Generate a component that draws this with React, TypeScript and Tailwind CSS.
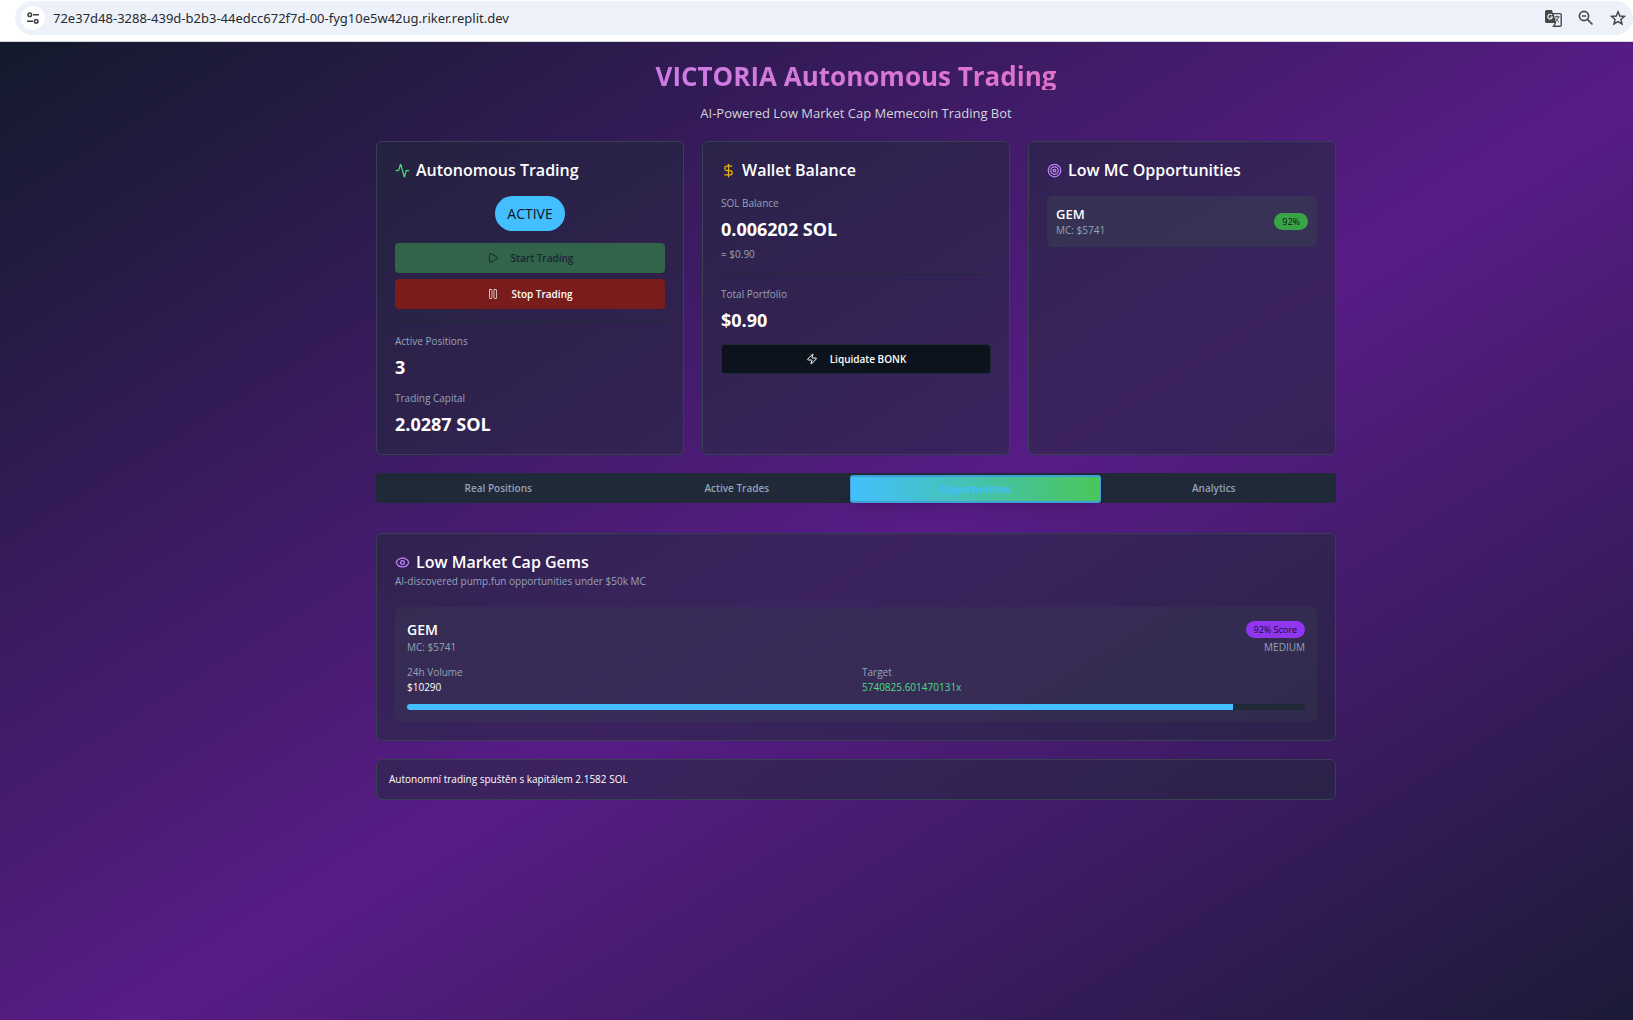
import React from "react";
import { Activity, DollarSign, Target, Play, Pause, Zap, Eye } from "lucide-react";

function BrowserBar() {
  return (
    <div className="flex h-[42px] shrink-0 items-start border-b border-[#d3d6dc] bg-white pt-px pl-[15px]">
      <div className="flex h-[34px] w-full items-center rounded-full bg-[#edf1fa] pr-[7px] pl-1.5">
        <button
          type="button"
          aria-label="View site information"
          className="flex h-6 w-6 shrink-0 items-center justify-center rounded-full bg-white"
        >
          <svg viewBox="0 0 12 12" className="h-3 w-3" fill="none" stroke="#3c4043" strokeWidth="1.5">
            <circle cx="2.8" cy="2.8" r="1.8" />
            <path d="M6 2.8h6M0 9.2h6" />
            <circle cx="9.2" cy="9.2" r="1.8" />
          </svg>
        </button>
        <input
          aria-label="Address"
          defaultValue="72e37d48-3288-439d-b2b3-44edcc672f7d-00-fyg10e5w42ug.riker.replit.dev"
          className="ml-2 min-w-0 flex-1 bg-transparent pt-0.5 font-['Noto_Sans',sans-serif] text-[13px] text-[#27292d] outline-none"
        />
        <div className="flex items-center gap-4 text-[#474747]">
          <button type="button" aria-label="Translate this page">
            <svg viewBox="0 0 17 17" className="h-[17px] w-[17px]">
              <path d="M1.5 0H7l3.5 13h-9A1.5 1.5 0 0 1 0 11.500v-10A1.500 1.500 0 0 1 1.500 0Z" fill="#474747" />
              <path d="M7.700 3.600H15A1.200 1.200 0 0 1 16.200 4.800V15A1.200 1.200 0 0 1 15 16.200H8.500L10.500 13Z" fill="none" stroke="#474747" strokeWidth="1.400" />
              <path d="M7 5.200A2.300 2.300 0 1 0 7.400 7H5.200" fill="none" stroke="#edf1fa" strokeWidth="1.200" />
              <path d="M9.500 6.800H14.500M12 5.600V6.800M13.500 6.800C13 9 11.500 10.500 10.300 11.300M10.700 8.300C11.500 10 12.700 11.300 14 12" fill="none" stroke="#474747" strokeWidth="1" />
            </svg>
          </button>
          <button type="button" aria-label="Zoom out">
            <svg viewBox="0 0 16 16" className="h-4 w-4" fill="none" stroke="#474747" strokeWidth="1.600">
              <circle cx="6" cy="6" r="4.600" />
              <path d="M9.400 9.400L14.500 14.500M4 6h4" />
            </svg>
          </button>
          <button type="button" aria-label="Bookmark this page">
            <svg viewBox="0 0 16 16" className="h-4 w-4" fill="none" stroke="#474747" strokeWidth="1.500">
              <path d="M8 1.800L9.800 6l4.600.4-3.500 3 1.100 4.500L8 11.500l-4 2.400 1.100-4.500-3.500-3L6.200 6Z" />
            </svg>
          </button>
        </div>
      </div>
    </div>
  );
}

function Card({ children }: { children: React.ReactNode }) {
  return (
    <section className="rounded-md border border-[#374151] bg-[#1f2937]/50 p-[18px]">{children}</section>
  );
}

function CardTitle({ icon, children }: { icon: React.ReactNode; children: React.ReactNode }) {
  return (
    <h2 className="flex h-5 items-center gap-1.5 text-[16px] leading-5 font-semibold whitespace-nowrap text-white">
      {icon}
      {children}
    </h2>
  );
}

function Stat({ label, value }: { label: string; value: string }) {
  return (
    <div>
      <p className="text-[10px] leading-[15px] text-[#94a3b8]">{label}</p>
      <p className="mt-1.5 text-[18px] leading-6 font-bold text-white">{value}</p>
    </div>
  );
}

const tabs = ["Real Positions", "Active Trades", "Opportunities", "Analytics"];

export default function App() {
  return (
    <div className="flex h-screen flex-col overflow-hidden font-['Open_Sans','Noto_Sans',sans-serif]">
      <BrowserBar />
      <div className="min-h-0 flex-1 overflow-auto [scrollbar-width:none]">
        <main className="min-h-[calc(100vh+40px)] w-[calc(100%+79px)] bg-linear-to-br/srgb from-[#131a2c] via-[#581c87] to-[#131a2c] p-[18px]">
          <div className="mx-auto max-w-[960px]">
            <header className="text-center">
              <h1 className="bg-linear-to-r/srgb from-[#c084fc] to-[#ec6cb0] bg-clip-text pt-0.5 text-[26px] leading-7 font-bold text-transparent">
                VICTORIA Autonomous Trading
              </h1>
              <p className="mt-3.5 text-[13px] leading-[19px] text-[#d1d5db]">
                AI-Powered Low Market Cap Memecoin Trading Bot
              </p>
            </header>

            <div className="mt-[18px] grid grid-cols-3 gap-[18px]">
              <Card>
                <CardTitle icon={<Activity size={15} className="text-[#4ade80]" />}>Autonomous Trading</CardTitle>
                <div className="mt-4 flex flex-col gap-3">
                  <span className="flex h-[35px] items-center self-center rounded-full bg-[#43bfff] px-3 text-[14px] font-medium text-[#0d131c]">
                    ACTIVE
                  </span>
                  <div className="flex flex-col gap-1.5">
                    <button
                      type="button"
                      disabled
                      className="flex h-[30px] items-center justify-center gap-3 rounded bg-[#32644a] text-[10px] font-semibold text-[#1c2536]"
                    >
                      <Play size={12} />
                      Start Trading
                    </button>
                    <button
                      type="button"
                      className="flex h-[30px] items-center justify-center gap-3 rounded bg-[#7a1c1c] text-[10px] font-semibold text-white"
                    >
                      <Pause size={12} className="text-white/70" />
                      Stop Trading
                    </button>
                  </div>
                  <hr className="border-[#1f2937]" />
                  <Stat label="Active Positions" value="3" />
                  <Stat label="Trading Capital" value="2.0287 SOL" />
                </div>
              </Card>

              <Card>
                <CardTitle icon={<DollarSign size={15} className="text-[#eab308]" />}>Wallet Balance</CardTitle>
                <div className="mt-4 flex flex-col gap-3">
                  <div>
                    <Stat label="SOL Balance" value="0.006202 SOL" />
                    <p className="mt-1.5 text-[10px] leading-[15px] text-[#94a3b8]">≈ $0.90</p>
                  </div>
                  <hr className="border-[#1f2937]" />
                  <Stat label="Total Portfolio" value="$0.90" />
                  <button
                    type="button"
                    className="flex h-[30px] items-center justify-center gap-3 rounded border border-[#1f2937] bg-[#0d131c] text-[10px] font-semibold text-white"
                  >
                    <Zap size={12} />
                    Liquidate BONK
                  </button>
                </div>
              </Card>

              <Card>
                <CardTitle icon={<Target size={15} className="text-[#c084fc]" />}>Low MC Opportunities</CardTitle>
                <div className="mt-4 flex items-center justify-between rounded-md bg-[#374151]/50 p-[9px]">
                  <div>
                    <p className="text-[13px] leading-[18px] font-semibold text-white">GEM</p>
                    <p className="text-[10px] leading-[15px] text-[#94a3b8]">MC: $5741</p>
                  </div>
                  <span className="flex h-[17px] items-center rounded-full bg-[#39a445] px-2 text-[9px] font-medium text-[#0d131c]">
                    92%
                  </span>
                </div>
              </Card>
            </div>

            <div role="tablist" className="mt-[18px] grid h-[30px] grid-cols-4 rounded bg-[#1f2937] px-[3px] pt-0.5">
              {tabs.map((tab) =>
                tab === "Opportunities" ? (
                  <button
                    key={tab}
                    type="button"
                    role="tab"
                    aria-selected="true"
                    className="-mx-1.5 rounded-[3px] border border-y-2 border-[#3f9fd4] bg-linear-to-r/srgb from-[#43bfff] to-[#49c65a] text-[10px] leading-4 font-bold text-[#43bfff] shadow-lg"
                  >
                    {tab}
                  </button>
                ) : (
                  <button
                    key={tab}
                    type="button"
                    role="tab"
                    aria-selected="false"
                    className="pb-0.5 text-[10px] font-semibold text-[#94a3b8]"
                  >
                    {tab}
                  </button>
                ),
              )}
            </div>

            <div className="mt-[30px]">
              <Card>
                <CardTitle icon={<Eye size={15} className="text-[#c084fc]" />}>Low Market Cap Gems</CardTitle>
                <p className="mt-0.5 text-[10px] leading-[15px] text-[#94a3b8]">
                  AI-discovered pump.fun opportunities under $50k MC
                </p>
                <div className="mt-[18px] rounded-md bg-[#374151]/30 p-3">
                  <div className="flex items-start justify-between">
                    <div>
                      <h3 className="text-[14px] leading-[21px] font-semibold text-white">GEM</h3>
                      <p className="text-[10px] leading-[15px] text-[#94a3b8]">MC: $5741</p>
                    </div>
                    <div className="text-right">
                      <div className="flex h-[21px] items-center">
                        <span className="flex h-[17px] items-center rounded-full bg-[#9035f0] px-2 text-[9px] font-medium text-[#0d131c]">
                          92% Score
                        </span>
                      </div>
                      <p className="text-[10px] leading-[15px] text-[#94a3b8]">MEDIUM</p>
                    </div>
                  </div>
                  <dl className="mt-2.5 grid grid-cols-2 gap-3 text-[10px] leading-[15px]">
                    <div>
                      <dt className="text-[#94a3b8]">24h Volume</dt>
                      <dd className="font-medium text-white">$10290</dd>
                    </div>
                    <div>
                      <dt className="text-[#94a3b8]">Target</dt>
                      <dd className="text-[#4ade80]">5740825.601470131x</dd>
                    </div>
                  </dl>
                  <div
                    role="progressbar"
                    aria-valuenow={92}
                    aria-label="Score"
                    className="mt-[9px] h-1.5 overflow-hidden rounded-full bg-[#1f2937]"
                  >
                    <div className="h-full w-[92%] bg-[#43bfff]" />
                  </div>
                </div>
              </Card>
            </div>

            <div
              role="status"
              className="mt-[18px] rounded-md border border-[#374151] bg-[#1f2937]/50 p-3 text-[10px] leading-[15px] font-medium text-white"
            >
              Autonomní trading spuštěn s kapitálem 2.1582 SOL
            </div>
          </div>
        </main>
      </div>
    </div>
  );
}
